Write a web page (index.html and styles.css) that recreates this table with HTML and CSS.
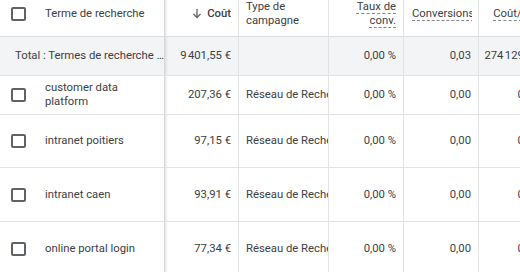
FILE: index.html
```html
<!DOCTYPE html>
<html lang="fr">
<head>
<meta charset="utf-8">
<link rel="stylesheet" href="styles.css">
</head>
<body>
<div class="wrap">
  <div class="grid">
    <!-- header -->
    <div class="cell head first"><span class="cb"></span><span class="term-h">Terme de recherche</span></div>
    <div class="cell head num sticky-edge"><svg class="arrow" width="10" height="11" viewBox="0 0 10 11"><path d="M5 1v8.5M1.5 6L5 9.5 8.5 6" fill="none" stroke="#5f6368" stroke-width="1.3"/></svg><span class="sorted">Coût</span></div>
    <div class="cell head left">Type de<br>campagne</div>
    <div class="cell head num"><span class="dash">Taux de<br>conv.</span></div>
    <div class="cell head clip"><span class="dash">Conversions</span></div>
    <div class="cell head num"><span class="dash">Coût/conv.</span></div>

    <!-- total -->
    <div class="cell total first"><span class="total-t">Total : Termes de recherche …</span></div>
    <div class="cell total num sticky-edge">9&#8239;401,55 €</div>
    <div class="cell total"></div>
    <div class="cell total num">0,00 %</div>
    <div class="cell total num">0,03</div>
    <div class="cell total num">274&#8239;129,00 €</div>

    <!-- row 1 -->
    <div class="cell first"><span class="cb"></span><span class="term">customer data<br>platform</span></div>
    <div class="cell num sticky-edge">207,36 €</div>
    <div class="cell left">Réseau de Recherche</div>
    <div class="cell num">0,00 %</div>
    <div class="cell num">0,00</div>
    <div class="cell num">0,00 €</div>

    <!-- row 2 -->
    <div class="cell first"><span class="cb"></span><span class="term">intranet poitiers</span></div>
    <div class="cell num sticky-edge">97,15 €</div>
    <div class="cell left">Réseau de Recherche</div>
    <div class="cell num">0,00 %</div>
    <div class="cell num">0,00</div>
    <div class="cell num">0,00 €</div>

    <!-- row 3 -->
    <div class="cell first"><span class="cb"></span><span class="term">intranet caen</span></div>
    <div class="cell num sticky-edge">93,91 €</div>
    <div class="cell left">Réseau de Recherche</div>
    <div class="cell num">0,00 %</div>
    <div class="cell num">0,00</div>
    <div class="cell num">0,00 €</div>

    <!-- row 4 -->
    <div class="cell first"><span class="cb"></span><span class="term">online portal login</span></div>
    <div class="cell num sticky-edge">77,34 €</div>
    <div class="cell left">Réseau de Recherche</div>
    <div class="cell num">0,00 %</div>
    <div class="cell num">0,00</div>
    <div class="cell num">0,00 €</div>
  </div>
</div>
</body>
</html>
```

FILE: styles.css
```css
html, body {
  margin: 0;
  padding: 0;
  background: #ffffff;
}

.wrap {
  width: 520px;
  height: 272px;
  overflow: hidden;
}

.grid {
  display: grid;
  grid-template-columns: 165px 74px 90px 75px 75px 77px;
  grid-template-rows: 37px 39px 39px 53px 54px 54px;
  font-family: Roboto, "Liberation Sans", sans-serif;
  font-size: 11.3px;
  line-height: 14px;
  color: #3c4043;
  width: 556px;
}

.cell {
  box-sizing: border-box;
  border-right: 1px solid #e2e3e5;
  border-bottom: 1px solid #e2e3e5;
  display: flex;
  align-items: center;
  white-space: nowrap;
  overflow: hidden;
  min-width: 0;
}

.head {
  padding-bottom: 9px;
  border-bottom-color: #dadce0;
}

.total {
  background: #f3f4f5;
}

.first {
  padding-left: 11px;
  padding-right: 2px;
  border-right-color: #d6d7d9;
}

.sticky-edge {
  background-image: linear-gradient(to right, rgba(0, 0, 0, 0.09), rgba(0, 0, 0, 0) 3px);
}

.num {
  justify-content: flex-end;
  padding-right: 7px;
  text-align: right;
}

.left {
  padding-left: 7px;
}

.cb {
  box-sizing: border-box;
  width: 15px;
  height: 14px;
  border: 2px solid #5f6368;
  border-radius: 2px;
  flex: none;
}

.term-h,
.term {
  margin-left: 19px;
}

.total-t {
  margin-left: 4px;
}

.arrow {
  margin-right: 5px;
  flex: none;
}

.sorted {
  font-weight: 500;
}

.dash {
  text-decoration: underline dashed #80868b;
  text-decoration-thickness: 1px;
  text-underline-offset: 3px;
}

.head.clip {
  padding-left: 8px;
  padding-right: 6px;
}

.head.clip .dash {
  overflow: hidden;
  min-width: 0;
  padding-bottom: 4px;
  margin-bottom: -4px;
}
```
